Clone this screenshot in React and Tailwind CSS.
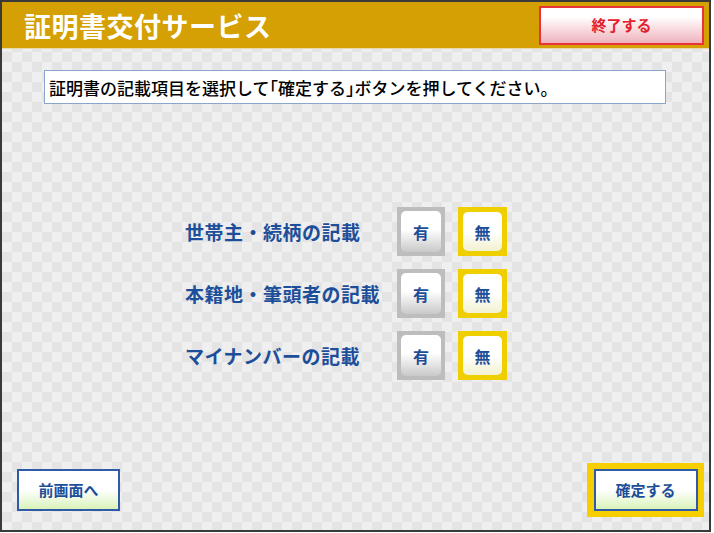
import React from 'react';

const font = { fontFamily: '"Noto Sans CJK JP", "Noto Sans", sans-serif' };

const rows = ['世帯主・続柄の記載', '本籍地・筆頭者の記載', 'マイナンバーの記載'];

const ChoiceYes = () => (
  <div className="w-[48px] h-[49px] bg-[#bdbdbd] p-[4px]">
    <div className="w-full h-full rounded-[5px] bg-gradient-to-b from-white from-45% to-[#c9c9c9] flex items-center justify-center text-[16px] font-bold text-[#1d4e9a]">
      有
    </div>
  </div>
);

const ChoiceNo = () => (
  <div className="w-[49px] h-[49px] bg-[#f0cf00] p-[5px]">
    <div className="w-full h-full rounded-[5px] bg-gradient-to-b from-white from-50% to-[#f2f1d0] flex items-center justify-center text-[16px] font-bold text-[#1d4e9a]">
      無
    </div>
  </div>
);

const App = () => {
  return (
    <div className="w-[714px] h-[533px] bg-white" style={font}>
      <div className="w-[711px] h-[532px] border-2 border-[#3a3a3a] flex flex-col bg-[#e9e9e9] bg-[image:repeating-conic-gradient(#e4e4e4_0%_25%,#efefef_0%_50%)] bg-[length:20px_20px]">
        {/* Header */}
        <div className="h-[47px] shrink-0 bg-[#d4a003] border-b border-[#e8d9a8] flex items-center justify-between pl-[22px] pr-[5px]">
          <h1 className="text-white font-bold text-[27px] leading-none tracking-[0.5px]">証明書交付サービス</h1>
          <button className="w-[165px] h-[39px] border-2 border-[#e8333a] bg-gradient-to-b from-white from-25% to-[#eeb3bd] text-[#e3202e] font-bold text-[15px] flex items-center justify-center">
            終了する
          </button>
        </div>

        {/* Instruction */}
        <div className="mt-[21px] ml-[42px] w-[622px] h-[34px] bg-white border border-[#8aa6cf] flex items-center pl-[4px] text-[17px] font-medium text-black leading-none">
          証明書の記載項目を選択して<span className="[font-feature-settings:'halt']">「</span>確定する<span className="[font-feature-settings:'halt']">」</span>ボタンを押してください。
        </div>

        {/* Options */}
        <div className="mt-[103px] ml-[183px] flex flex-col gap-[13px]">
          {rows.map((label) => (
            <div key={label} className="flex items-center h-[49px]">
              <span className="w-[212px] text-[19px] font-bold text-[#1d4e9a] leading-none tracking-[0.5px]">{label}</span>
              <ChoiceYes />
              <div className="w-[13px]" />
              <ChoiceNo />
            </div>
          ))}
        </div>

        {/* Footer */}
        <div className="mt-auto mb-[13px] flex items-center justify-between pl-[15px] pr-[5px]">
          <button className="w-[103px] h-[42px] border-2 border-[#2f5aa8] bg-gradient-to-b from-white from-50% to-[#d9f2b8] text-[#1d4e9a] font-bold text-[15px] flex items-center justify-center">
            前画面へ
          </button>
          <div className="w-[117px] h-[54px] bg-[#f7cf00] flex items-center justify-center">
            <button className="w-[104px] h-[42px] border-2 border-[#2f5aa8] bg-gradient-to-b from-white from-50% to-[#d9f2b8] text-[#1d4e9a] font-bold text-[15px] flex items-center justify-center">
              確定する
            </button>
          </div>
        </div>
      </div>
    </div>
  );
};

export default App;
